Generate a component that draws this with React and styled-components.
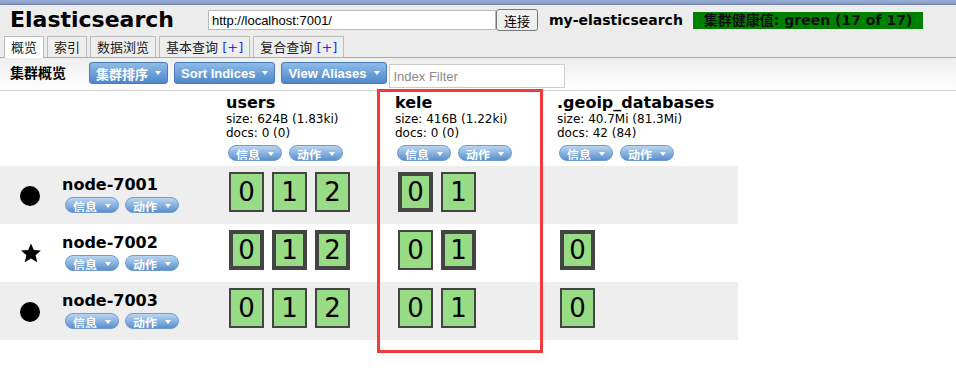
import React from 'react';
import styled, { createGlobalStyle } from 'styled-components';

const GlobalStyle = createGlobalStyle`
  html, body { margin: 0; padding: 0; background: #fff; }
  body {
    font-family: "DejaVu Sans", "Noto Sans CJK SC", sans-serif;
    color: #000;
  }
`;

const Page = styled.div`
  position: relative;
  width: 956px;
  height: 392px;
  overflow: hidden;
  background: #fff;
`;

const Header = styled.header`
  background: #ececec;
`;

const TopBand = styled.div`
  height: 4px;
  background: linear-gradient(#9db0d6, #8599c3);
  border-bottom: 1px solid #6f84ae;
`;

const TitleRow = styled.div`
  display: flex;
  align-items: center;
  height: 30px;
  padding-left: 10px;
`;

const Title = styled.h1`
  margin: 0;
  width: 198px;
  font: 700 22px/26px "DejaVu Sans", sans-serif;
`;

const UrlInput = styled.input`
  box-sizing: border-box;
  width: 288px;
  height: 20px;
  border: 1px solid #b8b8b8;
  padding: 0 3px;
  font: 13px "Liberation Sans", sans-serif;
  color: #000;
  background: #fff;
`;

const ConnectButton = styled.button`
  box-sizing: border-box;
  height: 22px;
  padding: 0 7px;
  border: 1px solid #767676;
  border-radius: 3px;
  background: #efefef;
  font: 13px "Liberation Sans", "Noto Sans CJK SC", sans-serif;
  color: #000;
`;

const ClusterName = styled.span`
  margin-left: 11px;
  font: 700 14px "DejaVu Sans", sans-serif;
`;

const Health = styled.span`
  margin-left: 10px;
  height: 17px;
  padding: 0 11px;
  background: #008000;
  color: #111;
  font: 700 14px/17px "DejaVu Sans", "Noto Sans CJK SC", sans-serif;
`;

const Tabs = styled.nav`
  display: flex;
  align-items: flex-end;
  gap: 3px;
  height: 21px;
  margin-top: 1px;
  padding-left: 4px;
  border-bottom: 1px solid #acacac;
`;

const Tab = styled.div`
  box-sizing: border-box;
  height: ${p => (p.$active ? '22px' : '21px')};
  margin-bottom: ${p => (p.$active ? '-1px' : '0')};
  padding: 2px 6px 0;
  border: 1px solid #bcbcbc;
  border-bottom: none;
  background: ${p => (p.$active ? '#fff' : '#eeeeee')};
  font: 13px/18px "DejaVu Sans", "Noto Sans CJK SC", sans-serif;
  color: #222;
  white-space: nowrap;
`;

const Plus = styled.span`
  color: #2a2aff;
`;

const Toolbar = styled.div`
  box-sizing: border-box;
  display: flex;
  align-items: flex-start;
  gap: 6px;
  height: 33px;
  padding: 4px 0 0 10px;
  background: linear-gradient(#eeeeee, #ffffff);
  border-bottom: 1px solid #d4d4d4;
`;

const ToolbarLabel = styled.span`
  width: 73px;
  font: 700 14px/22px "DejaVu Sans", "Noto Sans CJK SC", sans-serif;
`;

const MenuButton = styled.button`
  box-sizing: border-box;
  display: inline-flex;
  align-items: center;
  gap: 7px;
  height: 22px;
  padding: 0 6px;
  border: 1px solid #4a7cb6;
  border-radius: 3px;
  background: linear-gradient(#8ebbe8, #4f87c8);
  color: #fff;
  font: 700 13px "Liberation Sans", "Noto Sans CJK SC", sans-serif;
`;

const Caret = styled.span`
  display: inline-block;
  width: 0;
  height: 0;
  margin-top: ${p => p.$top || 0}px;
  border-left: 3.5px solid transparent;
  border-right: 3.5px solid transparent;
  border-top: 4px solid #fff;
`;

const FilterInput = styled.input`
  box-sizing: border-box;
  width: 176px;
  height: 24px;
  margin: 2px 0 0 -4px;
  padding: 0 4px;
  border: 1px solid #cccccc;
  font: 13px "Liberation Sans", sans-serif;
  &::placeholder { color: #8a8a8a; }
`;

const GRID = '222px 169px 162px 185px';

const HeadRow = styled.div`
  display: grid;
  grid-template-columns: ${GRID};
  width: 738px;
  height: 75px;
  background: #fff;
`;

const NodeRow = styled.div`
  display: grid;
  grid-template-columns: ${GRID};
  width: 738px;
  height: 58px;
  background: ${p => (p.$shade ? '#eeeeee' : '#ffffff')};
`;

const IndexCell = styled.div`
  padding: 3px 0 0 4px;
`;

const IndexName = styled.div`
  font: 700 16px/18px "DejaVu Sans", sans-serif;
`;

const IndexStat = styled.div`
  font: 12px/14px "DejaVu Sans", sans-serif;
`;

const PillGroup = styled.div`
  display: flex;
  gap: ${p => p.$gap || 7}px;
  margin-top: ${p => p.$top || 0}px;
  padding-left: ${p => p.$left || 0}px;
`;

const Pill = styled.span`
  box-sizing: border-box;
  display: inline-flex;
  align-items: flex-start;
  gap: 8px;
  height: 16px;
  padding: 1px 7px 0;
  overflow: hidden;
  border: 1px solid #6f9bd1;
  border-radius: 8px;
  background: linear-gradient(#bad6f2, #5a90cf);
  color: #fff;
  font: 700 12px/16px "Noto Sans CJK SC", sans-serif;
`;

const NodeCell = styled.div`
  display: flex;
  padding: 10px 0 0 20px;
`;

const Dot = styled.span`
  width: 20px;
  height: 20px;
  margin-top: 10px;
  border-radius: 50%;
  background: #000;
`;

const StarIcon = styled.svg`
  width: 22px;
  height: 22px;
  margin-top: 8px;
`;

const NodeInfo = styled.div`
  margin-left: ${p => p.$offset}px;
`;

const NodeName = styled.div`
  font: 700 16px/18px "DejaVu Sans", sans-serif;
`;

const ShardCell = styled.div`
  display: flex;
  gap: 8px;
  padding: 6px 0 0 7px;
`;

const Shard = styled.div`
  box-sizing: border-box;
  display: flex;
  align-items: center;
  justify-content: center;
  width: 35px;
  height: 40px;
  border: ${p => (p.$primary ? 4 : 2)}px solid #444;
  background: #98dc86;
  font: 26px/1 "DejaVu Sans", sans-serif;
  color: #000;
`;

const Highlight = styled.div`
  position: absolute;
  left: 377px;
  top: 89px;
  width: 166px;
  height: 264px;
  box-sizing: border-box;
  border: 3px solid #f33a3a;
  pointer-events: none;
`;

const indices = [
  { name: 'users', size: '624B (1.83ki)', docs: '0 (0)' },
  { name: 'kele', size: '416B (1.22ki)', docs: '0 (0)' },
  { name: '.geoip_databases', size: '40.7Mi (81.3Mi)', docs: '42 (84)' },
];

const nodes = [
  {
    name: 'node-7001',
    master: false,
    shards: [
      [{ n: 0 }, { n: 1 }, { n: 2 }],
      [{ n: 0, p: true }, { n: 1 }],
      [],
    ],
  },
  {
    name: 'node-7002',
    master: true,
    shards: [
      [{ n: 0, p: true }, { n: 1, p: true }, { n: 2, p: true }],
      [{ n: 0 }, { n: 1, p: true }],
      [{ n: 0, p: true }],
    ],
  },
  {
    name: 'node-7003',
    master: false,
    shards: [
      [{ n: 0 }, { n: 1 }, { n: 2 }],
      [{ n: 0 }, { n: 1 }],
      [{ n: 0 }],
    ],
  },
];

function Pills({ gap, top, left }) {
  return (
    <PillGroup $gap={gap} $top={top} $left={left}>
      <Pill>信息<Caret $top={5} /></Pill>
      <Pill>动作<Caret $top={5} /></Pill>
    </PillGroup>
  );
}

export default function App() {
  return (
    <Page>
      <GlobalStyle />
      <Header>
        <TopBand />
        <TitleRow>
          <Title>Elasticsearch</Title>
          <UrlInput defaultValue="http://localhost:7001/" />
          <ConnectButton>连接</ConnectButton>
          <ClusterName>my-elasticsearch</ClusterName>
          <Health>集群健康值: green (17 of 17)</Health>
        </TitleRow>
        <Tabs>
          <Tab $active>概览</Tab>
          <Tab>索引</Tab>
          <Tab>数据浏览</Tab>
          <Tab>基本查询 <Plus>[+]</Plus></Tab>
          <Tab>复合查询 <Plus>[+]</Plus></Tab>
        </Tabs>
      </Header>
      <Toolbar>
        <ToolbarLabel>集群概览</ToolbarLabel>
        <MenuButton>集群排序<Caret /></MenuButton>
        <MenuButton>Sort Indices<Caret /></MenuButton>
        <MenuButton>View Aliases<Caret /></MenuButton>
        <FilterInput placeholder="Index Filter" />
      </Toolbar>
      <HeadRow>
        <div />
        {indices.map(ix => (
          <IndexCell key={ix.name}>
            <IndexName>{ix.name}</IndexName>
            <IndexStat>size: {ix.size}</IndexStat>
            <IndexStat>docs: {ix.docs}</IndexStat>
            <Pills gap={7} top={5} left={2} />
          </IndexCell>
        ))}
      </HeadRow>
      {nodes.map((node, i) => (
        <NodeRow key={node.name} $shade={i % 2 === 0}>
          <NodeCell>
            {node.master ? (
              <StarIcon viewBox="0 0 24 24">
                <path
                  d="M12 1.5l3.1 7.1 7.7.7-5.8 5.1 1.8 7.6L12 18l-6.8 4 1.8-7.6-5.8-5.1 7.7-.7z"
                  fill="#000"
                />
              </StarIcon>
            ) : (
              <Dot />
            )}
            <NodeInfo $offset={node.master ? 20 : 22}>
              <NodeName>{node.name}</NodeName>
              <Pills gap={6} top={3} left={3} />
            </NodeInfo>
          </NodeCell>
          {node.shards.map((list, j) => (
            <ShardCell key={j}>
              {list.map(s => (
                <Shard key={s.n} $primary={s.p}>{s.n}</Shard>
              ))}
            </ShardCell>
          ))}
        </NodeRow>
      ))}
      <Highlight />
    </Page>
  );
}
